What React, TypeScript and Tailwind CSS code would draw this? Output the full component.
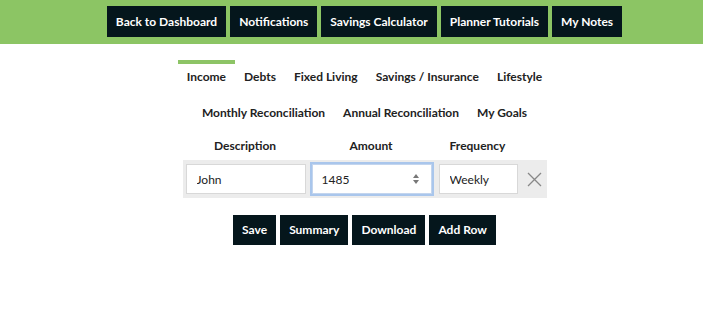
import { useState } from 'react';

const NAV = ['Back to Dashboard', 'Notifications', 'Savings Calculator', 'Planner Tutorials', 'My Notes'];
const TABS_1 = ['Income', 'Debts', 'Fixed Living', 'Savings / Insurance', 'Lifestyle'];
const TABS_2 = ['Monthly Reconciliation', 'Annual Reconciliation', 'My Goals'];
const ACTIONS = ['Save', 'Summary', 'Download', 'Add Row'];

export default function App() {
  const [active, setActive] = useState('Income');
  const [desc, setDesc] = useState('John');
  const [amount, setAmount] = useState('1485');
  const [freq, setFreq] = useState('Weekly');

  const tab = (t: string) => (
    <button
      key={t}
      onClick={() => setActive(t)}
      className={`px-[9px] pt-[5px] pb-[11px] text-[12px] leading-[16px] font-bold text-[#222] border-t-[4px] ${
        active === t ? 'border-[#8dc466]' : 'border-transparent'
      }`}
    >
      {t}
    </button>
  );

  return (
    <div className="min-h-[322px] bg-white font-['Lato','Noto_Sans',sans-serif]">
      <div className="bg-[#8cc564] h-[44px] pl-[26px] flex justify-center items-start pt-[6px] gap-[4px]">
        {NAV.map((n) => (
          <button key={n} className="h-[31px] px-[9px] bg-[#05161c] text-white text-[12px] font-bold">
            {n}
          </button>
        ))}
      </div>

      <div className="pl-[26px] flex flex-col items-center">
        <div className="flex mt-[16px]">{TABS_1.map(tab)}</div>
        <div className="flex">{TABS_2.map(tab)}</div>

        <div className="w-[364px]">
          <div className="flex text-[12px] font-bold text-[#222] h-[28px] items-center">
            <div className="w-[125px] text-center">Description</div>
            <div className="w-[127px] text-center">Amount</div>
            <div className="w-[86px] text-center">Frequency</div>
          </div>
          <div className="bg-[#ececec] flex items-center h-[38px] pl-[3px]">
            <input
              value={desc}
              onChange={(e) => setDesc(e.target.value)}
              className="w-[120px] h-[30px] bg-white border border-[#d8d8d8] px-[10px] text-[12px] text-[#222] outline-none"
            />
            <div className="ml-[4px] w-[124px] h-[34px] border-[2px] border-[#a9c6ec] flex">
              <input
                value={amount}
                onChange={(e) => setAmount(e.target.value)}
                className="flex-1 min-w-0 h-full bg-white border border-[#c3d5ee] pl-[9px] text-[12px] text-[#222] outline-none"
              />
            </div>
            <div className="-ml-[24px] w-[12px] flex flex-col items-center justify-center gap-[2px] text-[#777]">
              <svg width="6" height="4" viewBox="0 0 6 4"><path d="M0 4 L3 0 L6 4 Z" fill="currentColor" /></svg>
              <svg width="6" height="4" viewBox="0 0 6 4"><path d="M0 0 L3 4 L6 0 Z" fill="currentColor" /></svg>
            </div>
            <input
              value={freq}
              onChange={(e) => setFreq(e.target.value)}
              className="ml-[17px] w-[79px] h-[30px] bg-white border border-[#d8d8d8] px-[10px] text-[12px] text-[#222] outline-none"
            />
            <button className="ml-[9px] text-[#888]">
              <svg width="15" height="15" viewBox="0 0 15 15">
                <path d="M1 1 L14 14 M14 1 L1 14" stroke="currentColor" strokeWidth="1.3" />
              </svg>
            </button>
          </div>
        </div>

        <div className="flex gap-[4px] mt-[17px]">
          {ACTIONS.map((a) => (
            <button key={a} className="h-[30px] px-[9px] bg-[#05161c] text-white text-[12px] font-bold">
              {a}
            </button>
          ))}
        </div>
      </div>
    </div>
  );
}
